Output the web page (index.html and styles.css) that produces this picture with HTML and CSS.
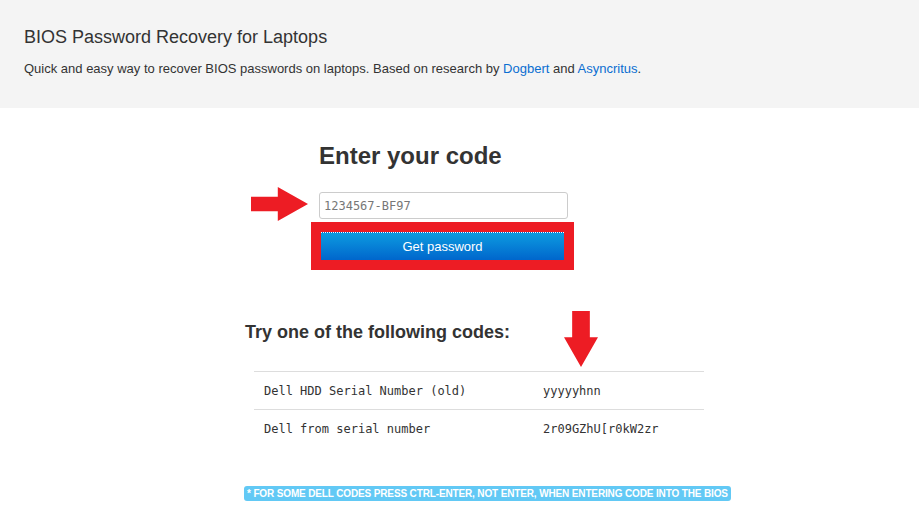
FILE: index.html
```html
<!DOCTYPE html>
<html lang="en">
<head>
    <meta charset="UTF-8">
    <meta name="viewport" content="width=device-width, initial-scale=1.0">
    <title>BIOS Password Recovery for Laptops</title>
    <link rel="stylesheet" href="styles.css">
</head>

<body>
    <header class="hero">
        <h1>BIOS Password Recovery for Laptops</h1>
        <p>Quick and easy way to recover BIOS passwords on laptops. Based on research by <a href="#">Dogbert</a> and <a href="#">Asyncritus</a>.</p>
    </header>

    <section class="entrada">
        <h2>Enter your code</h2>
        <div class="campo">
            <span class="flecha-der"></span>
            <input type="text" placeholder="1234567-BF97">
        </div>
        <div class="marco">
            <button type="button">Get password</button>
        </div>
    </section>

    <section class="resultados">
        <div class="titulo">
            <h3>Try one of the following codes:</h3>
            <span class="flecha-abajo"></span>
        </div>
        <table>
            <tr>
                <td>Dell HDD Serial Number (old)</td>
                <td>yyyyyhnn</td>
            </tr>
            <tr>
                <td>Dell from serial number</td>
                <td>2r09GZhU[r0kW2zr</td>
            </tr>
        </table>
        <span class="aviso">* For some Dell codes press Ctrl-Enter, not Enter, when entering code into the BIOS</span>
    </section>
</body>
</html>
```

FILE: styles.css
```css
body {
    font-family: "Liberation Sans", Arial, sans-serif;
    color: #333;
    background-color: #fff;
    margin: 0;
    padding: 0;
}

.hero {
    background-color: #f4f4f4;
    height: 108px;
    box-sizing: border-box;
    padding: 26px 24px 0;
}

.hero h1 {
    font-size: 18px;
    font-weight: normal;
    line-height: 22px;
    margin: 0 0 12px;
}

.hero p {
    font-size: 13px;
    line-height: 18px;
    margin: 0;
}

.hero a {
    color: #0a6ed1;
    text-decoration: none;
}

.entrada {
    margin-left: 311px;
    width: 263px;
}

.entrada h2 {
    font-size: 24px;
    line-height: 28px;
    margin: 34px 0 0 8px;
}

.campo {
    position: relative;
    margin: 22px 0 0 8px;
}

.campo input {
    display: block;
    width: 249px;
    height: 27px;
    box-sizing: border-box;
    border: 1px solid #ccc;
    border-radius: 3px;
    padding: 0 4px;
    font-family: "DejaVu Sans Mono", "Liberation Mono", monospace;
    font-size: 12px;
    color: #555;
}

.campo input::placeholder {
    color: #777;
}

.flecha-der {
    position: absolute;
    left: -68px;
    top: -5px;
    width: 57px;
    height: 34px;
    background-color: #ed1c24;
    clip-path: polygon(0 29%, 47% 29%, 47% 0, 100% 50%, 47% 100%, 47% 71%, 0 71%);
}

.marco {
    margin-top: 3px;
    border: 10px solid #ed1c24;
    width: 243px;
}

.marco button {
    display: block;
    width: 243px;
    height: 28px;
    border: none;
    border-top: 1px dotted #fff;
    background: linear-gradient(#0d9be0, #0066cc);
    color: #fff;
    font-family: "Liberation Sans", Arial, sans-serif;
    font-size: 13px;
    padding: 0;
    cursor: pointer;
}

.resultados {
    margin-left: 244px;
    width: 486px;
}

.titulo {
    position: relative;
}

.titulo h3 {
    font-size: 18px;
    line-height: 22px;
    margin: 51px 0 0 1px;
}

.flecha-abajo {
    position: absolute;
    left: 320px;
    top: -10px;
    width: 34px;
    height: 56px;
    background-color: #ed1c24;
    clip-path: polygon(24% 0, 76% 0, 76% 47%, 100% 47%, 50% 100%, 0 47%, 24% 47%);
}

table {
    margin: 28px 0 0 10px;
    width: 450px;
    border-collapse: collapse;
    font-family: "DejaVu Sans Mono", "Liberation Mono", monospace;
    font-size: 12px;
    color: #333;
}

td {
    border-top: 1px solid #ddd;
    height: 37px;
    padding: 0 10px;
}

td:last-child {
    width: 151px;
    padding-left: 0;
}

.aviso {
    display: inline-block;
    margin-top: 39px;
    background-color: #62c9f5;
    color: #fff;
    font-size: 10px;
    font-weight: bold;
    text-transform: uppercase;
    letter-spacing: -0.14px;
    white-space: nowrap;
    line-height: 15px;
    padding: 0 3px;
    border-radius: 3px;
}
```
